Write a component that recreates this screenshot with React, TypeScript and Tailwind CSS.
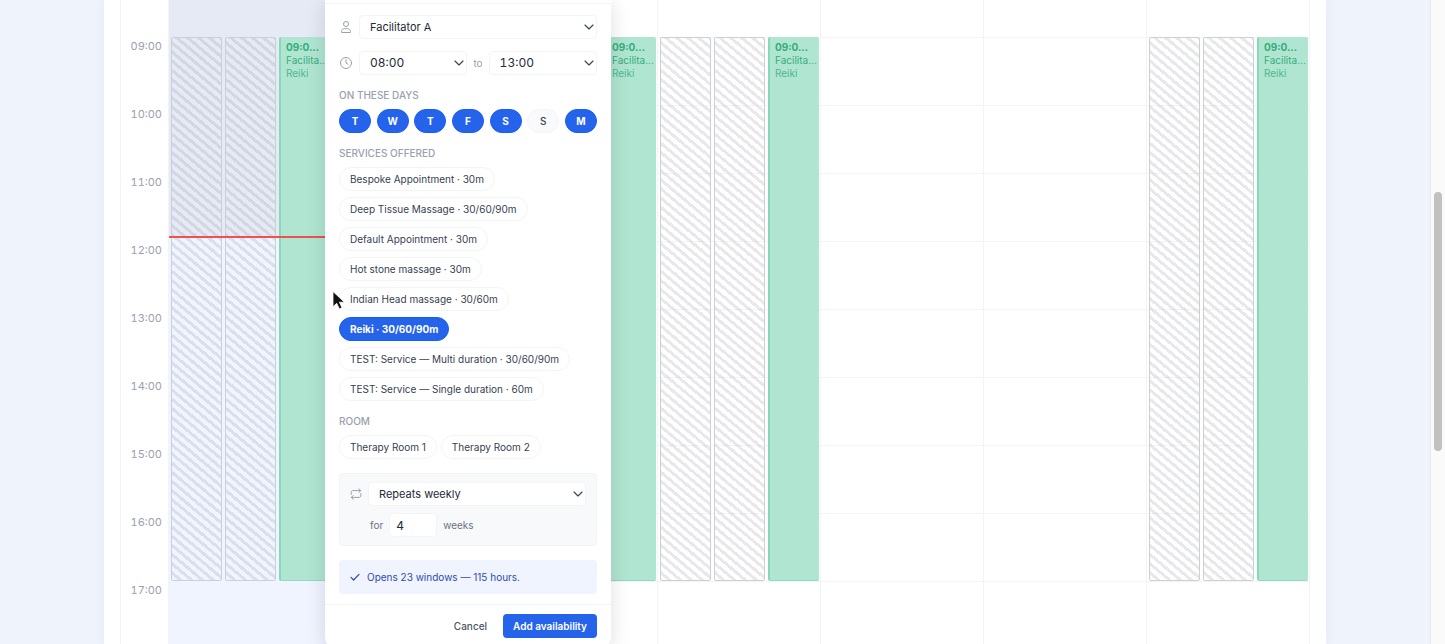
import { FC, ReactNode, useState } from "react"

interface ICalendarEvent {
  type: "busy" | "open"
}

interface IDayColumn {
  id: string
  today?: boolean
  events: ICalendarEvent[]
}

const HOURS = ["09:00", "10:00", "11:00", "12:00", "13:00", "14:00", "15:00", "16:00", "17:00"]

const FULL_DAY: ICalendarEvent[] = [{ type: "busy" }, { type: "busy" }, { type: "open" }]

const COLUMNS: IDayColumn[] = [
  { id: "tue", today: true, events: FULL_DAY },
  { id: "wed", events: [] },
  { id: "thu", events: FULL_DAY },
  { id: "fri", events: FULL_DAY },
  { id: "sat", events: [] },
  { id: "sun", events: [] },
  { id: "mon", events: FULL_DAY },
]

const DAYS = [
  { label: "T", name: "Tuesday" },
  { label: "W", name: "Wednesday" },
  { label: "T", name: "Thursday" },
  { label: "F", name: "Friday" },
  { label: "S", name: "Saturday" },
  { label: "S", name: "Sunday" },
  { label: "M", name: "Monday" },
]

const SERVICES = [
  "Bespoke Appointment · 30m",
  "Deep Tissue Massage · 30/60/90m",
  "Default Appointment · 30m",
  "Hot stone massage · 30m",
  "Indian Head massage · 30/60m",
  "Reiki · 30/60/90m",
  "TEST: Service — Multi duration · 30/60/90m",
  "TEST: Service — Single duration · 60m",
]

const ROOMS = ["Therapy Room 1", "Therapy Room 2"]

const toggle = (list: string[], item: string) =>
  list.includes(item) ? list.filter((i) => i !== item) : [...list, item]

const EventBlock: FC<ICalendarEvent> = ({ type }) => {
  if (type === "busy") {
    return (
      <div className="rounded-xs border border-[#cccfd8] bg-[repeating-linear-gradient(40deg,transparent_0px,transparent_4px,rgba(107,114,128,0.16)_4px,rgba(107,114,128,0.16)_7px)]" />
    )
  }

  return (
    <div className="rounded-xs border-b border-l-2 border-b-[#92d9bd] border-l-[#86d9b8] bg-[#b0e6d1] pt-1 pl-[5px] whitespace-nowrap text-[#35ad7d]">
      <p className="text-[10px] leading-3 font-bold">09:0...</p>
      <p className="text-[10px] leading-[14px]">Facilita...</p>
      <p className="text-[10px] leading-3 opacity-80">Reiki</p>
    </div>
  )
}

const DayColumn: FC<{ column: IDayColumn }> = ({ column }) => (
  <div className={`grid min-w-0 grid-cols-1 border-l border-gray-100 ${column.today ? "bg-[#eff4ff]" : ""}`}>
    {column.today && (
      <div className="col-start-1 row-start-1 h-[237px] bg-[#e6eaf5]" />
    )}
    <div className="col-start-1 row-start-1 pt-[37px]">
      {HOURS.map((hour) => (
        <div
          key={hour}
          className={`h-[68px] border-t ${column.today ? "border-transparent" : "border-gray-100"}`}
        />
      ))}
    </div>
    <div className="col-start-1 row-start-1 grid h-[581px] grid-cols-3 gap-[3px] pt-[37px] pr-px pl-0.5">
      {column.events.map((event, key) => (
        <EventBlock key={key} type={event.type} />
      ))}
    </div>
    {column.today && (
      <div className="z-10 col-start-1 row-start-1 mt-[236px] h-0.5 bg-[#ef5050]" />
    )}
  </div>
)

const Chevron: FC = () => (
  <svg
    className="pointer-events-none absolute top-1/2 right-[3px] size-2.5 -translate-y-1/2 text-gray-700"
    viewBox="0 0 10 10"
    fill="none"
    stroke="currentColor"
    strokeWidth="1.1"
    strokeLinecap="round"
    strokeLinejoin="round"
  >
    <path d="M1 3 5 7 9 3" />
  </svg>
)

const Select: FC<{ label: string, options: string[], time?: boolean }> = ({ label, options, time }) => (
  <div className="relative flex-1">
    <select
      aria-label={label}
      className={`block h-6 w-full appearance-none rounded-sm border border-gray-100 bg-white pr-5 pl-2.5 text-gray-800 ${
        time ? "text-xs tabular-nums" : "text-[11px]"
      }`}
    >
      {options.map((option) => (
        <option key={option}>{option}</option>
      ))}
    </select>
    <Chevron />
  </div>
)

const Chip: FC<{ active: boolean, onClick: () => void, children: ReactNode }> = ({ active, onClick, children }) => (
  <button
    type="button"
    aria-pressed={active}
    onClick={onClick}
    className={`h-6 rounded-full border px-2.5 text-[10px] whitespace-nowrap ${
      active
        ? "border-blue-600 bg-[#2563eb] font-bold text-white"
        : "border-gray-100 bg-white text-gray-700"
    }`}
  >
    {children}
  </button>
)

const Section: FC<{ title: string, children: ReactNode }> = ({ title, children }) => (
  <section>
    <h3 className="mb-1.5 text-[10px] leading-4 font-medium text-gray-400 uppercase">{title}</h3>
    {children}
  </section>
)

const AvailabilityDialog: FC = () => {
  const [days, setDays] = useState(["Tuesday", "Wednesday", "Thursday", "Friday", "Saturday", "Monday"])
  const [services, setServices] = useState(["Reiki · 30/60/90m"])
  const [rooms, setRooms] = useState<string[]>([])

  return (
    <form
      role="dialog"
      aria-label="Add availability"
      className="absolute top-0 left-[325px] z-20 w-[286px] rounded-b-lg bg-white shadow-[0_4px_20px_rgba(15,23,42,0.14)]"
    >
      <div className="h-1 border-b border-gray-100" />
      <div className="flex flex-col gap-3.5 px-3.5 pt-[11px] pb-2.5">
        <div className="flex flex-col gap-3">
          <div className="flex items-center gap-1.5">
            <svg className="size-3.5 text-gray-400" viewBox="0 0 14 14" fill="none" stroke="currentColor" strokeLinejoin="round">
              <circle cx="7" cy="4" r="2.5" />
              <path d="M2.6 12.5v-1.2c0-1.6 1.2-2.6 2.7-2.6h3.4c1.5 0 2.7 1 2.7 2.6v1.2z" />
            </svg>
            <Select label="Facilitator" options={["Facilitator A"]} />
          </div>
          <div className="flex items-center gap-1.5">
            <svg className="size-3.5 text-gray-400" viewBox="0 0 14 14" fill="none" stroke="currentColor" strokeLinecap="round" strokeLinejoin="round">
              <circle cx="7" cy="7" r="5.5" />
              <path d="M7 3.7V7l2 1.2" />
            </svg>
            <Select label="From" options={["08:00"]} time />
            <span className="text-[10px] text-gray-400">to</span>
            <Select label="To" options={["13:00"]} time />
          </div>
          <Section title="On these days">
            <div className="flex justify-between">
              {DAYS.map((day) => (
                <button
                  key={day.name}
                  type="button"
                  aria-label={day.name}
                  aria-pressed={days.includes(day.name)}
                  onClick={() => setDays(toggle(days, day.name))}
                  className={`h-6 w-8 rounded-full border text-[10px] ${
                    days.includes(day.name)
                      ? "border-blue-600 bg-[#2563eb] font-bold text-white"
                      : "border-gray-100 bg-gray-50 font-medium text-gray-700"
                  }`}
                >
                  {day.label}
                </button>
              ))}
            </div>
          </Section>
          <Section title="Services offered">
            <div className="flex flex-col items-start gap-1.5">
              {SERVICES.map((service) => (
                <Chip
                  key={service}
                  active={services.includes(service)}
                  onClick={() => setServices(toggle(services, service))}
                >
                  {service}
                </Chip>
              ))}
            </div>
          </Section>
          <Section title="Room">
            <div className="flex gap-1">
              {ROOMS.map((room) => (
                <Chip key={room} active={rooms.includes(room)} onClick={() => setRooms(toggle(rooms, room))}>
                  {room}
                </Chip>
              ))}
            </div>
          </Section>
        </div>

        <div className="rounded-sm border border-gray-100 bg-[#f8f9fb] px-2.5 py-2">
          <div className="flex items-center gap-1.5">
            <svg className="size-3 text-gray-400" viewBox="0 0 12 12" fill="none" stroke="currentColor" strokeLinecap="round" strokeLinejoin="round">
              <path d="M8.8.8 10.8 2.6 8.8 4.4M10.6 2.6H2.8c-.9 0-1.6.7-1.6 1.6v2.2" />
              <path d="M3.2 11.2 1.2 9.4 3.2 7.6M1.4 9.4h7.8c.9 0 1.6-.7 1.6-1.6V5.6" />
            </svg>
            <Select label="Repeats" options={["Repeats weekly"]} />
          </div>
          <div className="mt-[7px] flex items-center gap-1.5 pl-5 text-[10px] text-gray-500">
            <label htmlFor="weeks">for</label>
            <input
              id="weeks"
              type="text"
              inputMode="numeric"
              defaultValue="4"
              className="h-6 w-12 rounded-sm border border-gray-100 bg-white px-1.5 text-xs text-gray-800"
            />
            <span>weeks</span>
          </div>
        </div>

        <p className="flex h-[34px] items-center gap-1.5 rounded-sm bg-[#eff4ff] px-2.5 text-[10px] text-[#2f4bae]">
          <svg className="size-3" viewBox="0 0 12 12" fill="none" stroke="currentColor" strokeWidth="1.2" strokeLinecap="round" strokeLinejoin="round">
            <path d="M2 6.4 4.6 9 10 3.4" />
          </svg>
          Opens 23 windows — 115 hours.
        </p>
      </div>
      <div className="flex items-center justify-end gap-1.5 border-t border-gray-100 px-3.5 pt-[9px] pb-2">
        <button type="button" className="h-6 px-2.5 text-[10px] font-medium text-gray-600">
          Cancel
        </button>
        <button type="submit" className="h-6 rounded-sm bg-[#2563eb] px-2.5 text-[10px] font-semibold text-white">
          Add availability
        </button>
      </div>
    </form>
  )
}

const App: FC = () => (
  <div className="relative flex h-screen overflow-hidden bg-[#eff3fc] font-['Inter',sans-serif]">
    <main className="min-w-0 flex-1 px-[104px]">
      <div className="flex h-full bg-white px-4 shadow-[0_0_12px_rgba(30,58,138,0.06)]">
        <div className="w-12 shrink-0 border-l border-gray-100 pt-[38px]">
          {HOURS.map((hour) => (
            <div key={hour} className="h-[68px] pr-1.5 text-right text-[11px] leading-4 text-gray-400 tabular-nums">
              {hour}
            </div>
          ))}
        </div>
        <div className="grid min-w-0 flex-1 grid-cols-7 border-r border-gray-100">
          {COLUMNS.map((column) => (
            <DayColumn key={column.id} column={column} />
          ))}
        </div>
      </div>
    </main>
    <div className="w-[15px] border-l border-gray-200 bg-[#fafafa] px-[3px] pt-48">
      <div className="h-[259px] rounded-full bg-[#c1c1c1]" />
    </div>

    <AvailabilityDialog />

    <svg className="absolute top-[290px] left-[331px] z-30 h-5 w-4" viewBox="0 0 16 20">
      <path d="M2 1.5v15.2l3.7-3.4 2.6 5.6 2.7-1.2-2.6-5.5h5z" fill="#111" stroke="#fff" strokeWidth="0.8" />
    </svg>
  </div>
)

export default App
